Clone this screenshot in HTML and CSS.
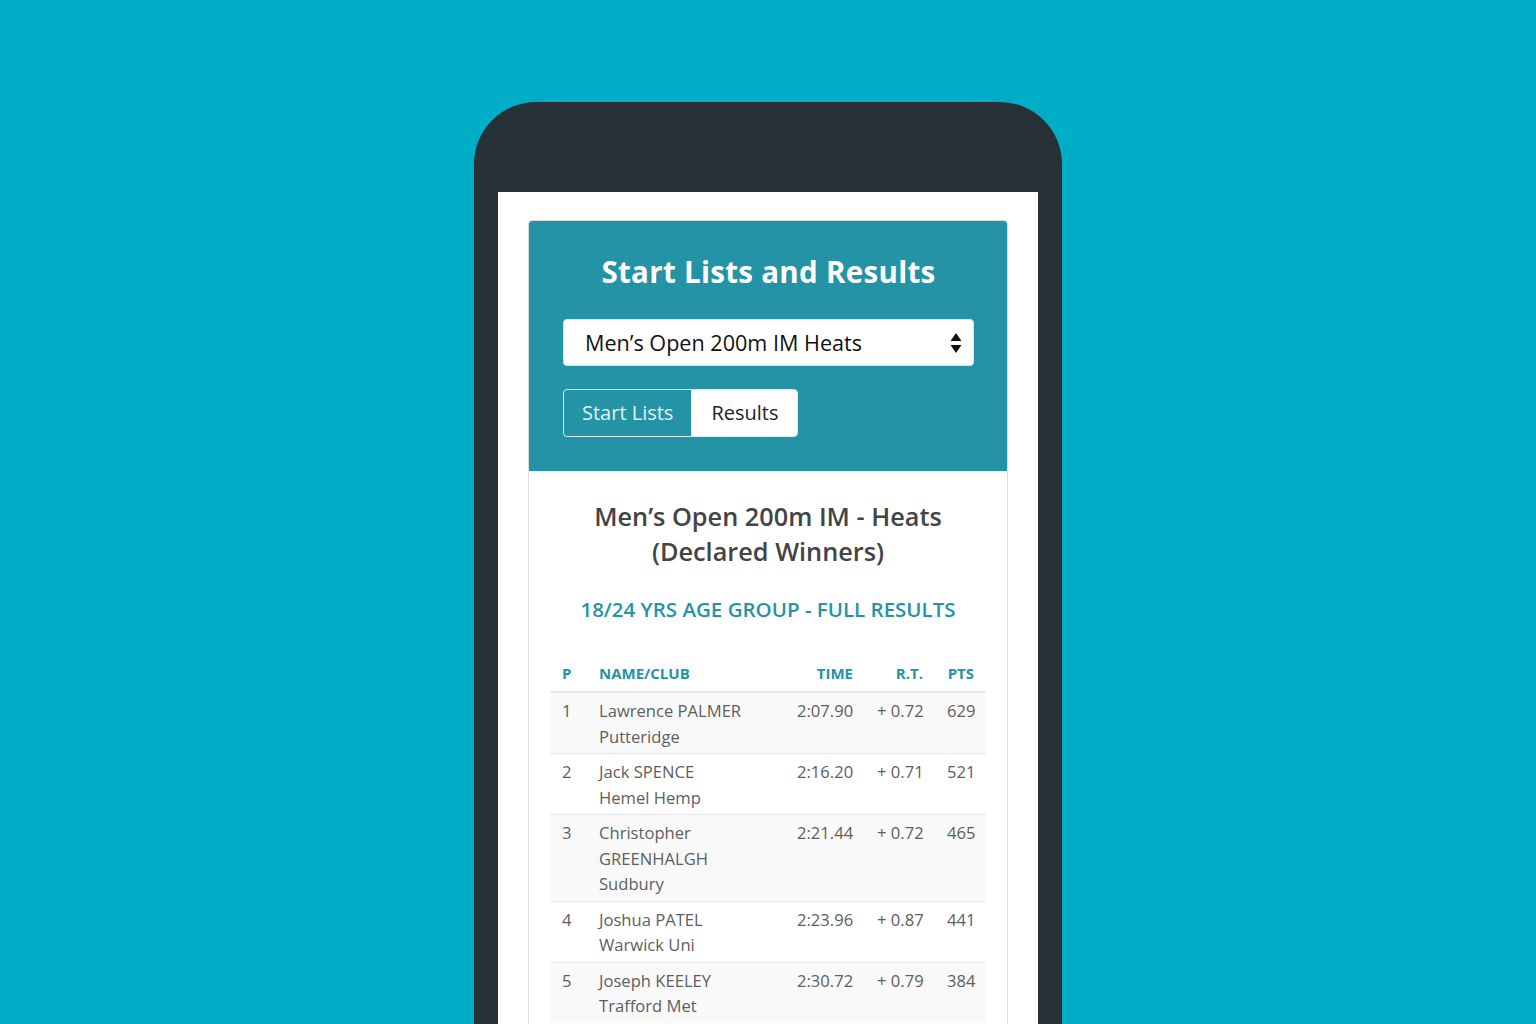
FILE: index.html
```html
<!DOCTYPE html>
<html lang="en">
<head>
<meta charset="utf-8">
<title>Start Lists and Results</title>
<link rel="stylesheet" href="styles.css">
</head>
<body>
<div class="stage">
  <div class="phone">
    <div class="screen">
      <div class="card">
        <div class="card-head">
          <h1 class="title">Start Lists and Results</h1>
          <div class="select">
            <span class="select-text">Men’s Open 200m IM Heats</span>
            <svg class="select-arrows" width="12" height="22" viewBox="0 0 12 22"><path d="M6 1 L11.5 9 L0.5 9 Z" fill="#111"/><path d="M6 21 L11.5 13 L0.5 13 Z" fill="#111"/></svg>
          </div>
          <div class="btn-group">
            <span class="btn btn-outline">Start Lists</span>
            <span class="btn btn-solid">Results</span>
          </div>
        </div>
        <div class="card-body">
          <h2 class="event">Men’s Open 200m IM - Heats<br>(Declared Winners)</h2>
          <h3 class="group">18/24 YRS AGE GROUP - FULL RESULTS</h3>
          <table class="results">
            <colgroup>
              <col class="c-p"><col class="c-name"><col class="c-time"><col class="c-rt"><col class="c-pts">
            </colgroup>
            <thead>
              <tr><th>P</th><th>NAME/CLUB</th><th class="r">TIME</th><th class="r">R.T.</th><th class="r">PTS</th></tr>
            </thead>
            <tbody>
              <tr><td>1</td><td>Lawrence PALMER<br>Putteridge</td><td class="r">2:07.90</td><td class="r">+ 0.72</td><td class="r">629</td></tr>
              <tr><td>2</td><td>Jack SPENCE<br>Hemel Hemp</td><td class="r">2:16.20</td><td class="r">+ 0.71</td><td class="r">521</td></tr>
              <tr><td>3</td><td>Christopher GREENHALGH<br>Sudbury</td><td class="r">2:21.44</td><td class="r">+ 0.72</td><td class="r">465</td></tr>
              <tr><td>4</td><td>Joshua PATEL<br>Warwick Uni</td><td class="r">2:23.96</td><td class="r">+ 0.87</td><td class="r">441</td></tr>
              <tr><td>5</td><td>Joseph KEELEY<br>Trafford Met</td><td class="r">2:30.72</td><td class="r">+ 0.79</td><td class="r">384</td></tr>
            </tbody>
          </table>
        </div>
      </div>
    </div>
  </div>
</div>
</body>
</html>
```

FILE: styles.css
```css
html, body {
  margin: 0;
  padding: 0;
  height: 100%;
  overflow: hidden;
}
body {
  background: #00adc6;
  font-family: "Open Sans", "Noto Sans", sans-serif;
}
.stage {
  display: flex;
  justify-content: center;
  padding-top: 102px;
}
.phone {
  width: 540px;
  padding: 90px 24px 0;
  background: #263238;
  border-radius: 62px 62px 0 0;
  height: 1000px;
}
.screen {
  background: #fff;
  height: 100%;
  padding: 28px 30px 0;
}
.card {
  border: 1px solid #dcdcdc;
  border-radius: 4px;
  overflow: hidden;
  height: 100%;
}
.card-head {
  background: #2493a6;
  padding: 33px 33px 34px 34px;
}
.title {
  margin: 0;
  color: #fff;
  font-family: "Open Sans", sans-serif;
  font-weight: 700;
  font-size: 29.5px;
  line-height: 36px;
  text-align: center;
  letter-spacing: 0.3px;
}
.select {
  margin-top: 29px;
  height: 47px;
  box-sizing: border-box;
  background: #fff;
  border: 1px solid #d6e6ea;
  border-radius: 4px;
  display: flex;
  align-items: center;
  justify-content: space-between;
  padding: 0 11px 0 21px;
}
.select-text {
  font-size: 21.6px;
  color: #111;
}
.btn-group {
  margin-top: 23px;
  display: inline-flex;
  border: 1px solid #d9ecef;
  border-radius: 4px;
  overflow: hidden;
}
.btn {
  display: block;
  height: 46px;
  line-height: 46px;
  font-size: 20px;
  padding: 0 18px;
}
.btn-outline {
  color: #e2f2f5;
  background: transparent;
  border-right: 1px solid #d9ecef;
}
.btn-solid {
  background: #fff;
  color: #222;
  padding: 0 19px;
}
.card-body {
  background: #fff;
  padding: 28px 21px 0;
}
.event {
  margin: 0;
  text-align: center;
  color: #444;
  font-size: 25.3px;
  font-weight: 600;
  line-height: 35px;
}
.group {
  margin: 27px 0 0;
  text-align: center;
  color: #2493a6;
  font-size: 20.5px;
  font-weight: 600;
  line-height: 26px;
}
.results {
  margin-top: 34px;
  width: 436px;
  table-layout: fixed;
  border-collapse: collapse;
  color: #5e5e5e;
}
.c-p { width: 37px; }
.c-name { width: 198px; }
.c-time { width: 80px; }
.c-rt { width: 70px; }
.c-pts { width: 51px; }
.results th {
  color: #2493a6;
  font-size: 15px;
  font-weight: 700;
  text-align: left;
  line-height: 25px;
  padding: 5px 12px;
  border-bottom: 2px solid #e8e8e8;
}
.results td {
  font-size: 16.6px;
  line-height: 25.5px;
  padding: 5px 12px 4px;
  vertical-align: top;
  border-top: 1px solid #e6e6e6;
}
.results .r {
  text-align: right;
  white-space: nowrap;
}
.results tbody tr:nth-child(odd) {
  background: #f9f9f9;
}
```
